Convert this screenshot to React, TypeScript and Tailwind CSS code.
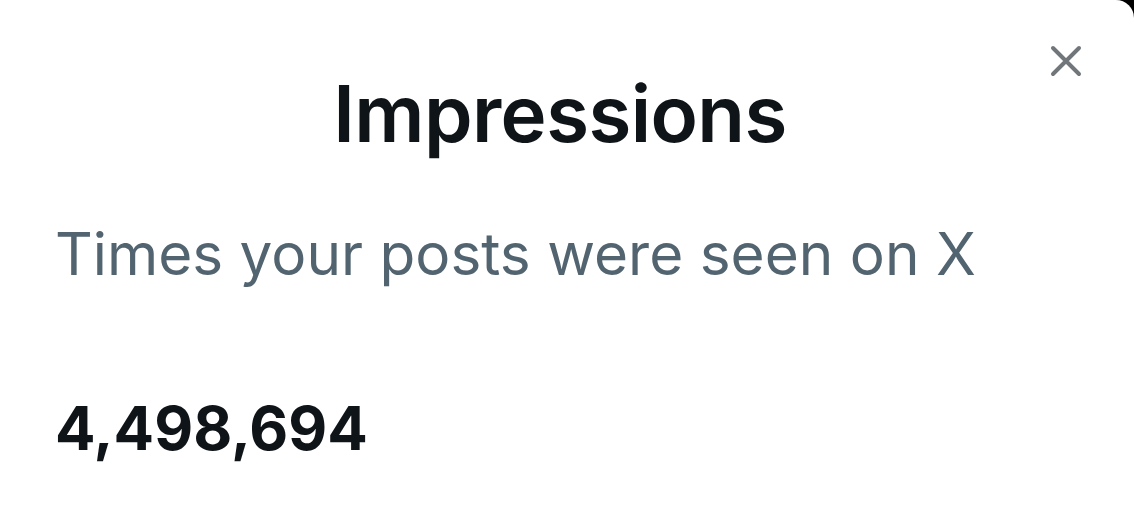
const CloseIcon = () => (
  <svg width="34" height="34" viewBox="0 0 34 34" fill="none">
    <path d="M4 4L30 30M30 4L4 30" stroke="currentColor" strokeWidth="4" strokeLinecap="round" />
  </svg>
);

const App = () => {
  return (
    <div className="w-[1134px] h-[515px] bg-black overflow-hidden">
      <div className="relative w-full h-full bg-white rounded-tr-[18px] font-['Inter',sans-serif] px-[55px]">
        <button className="absolute top-[44px] right-[51px] text-[#71767b]" aria-label="Close">
          <CloseIcon />
        </button>

        <div className="flex flex-col">
          <h1 className="pt-[66px] pr-[14px] text-center text-[78px] leading-[96px] font-semibold tracking-[-0.6px] text-[#0f1419]">
            Impressions
          </h1>
          <p className="mt-[54px] text-[58.5px] leading-[76px] text-[#536471]">
            Times your posts were seen on X
          </p>
          <p className="mt-[98px] text-[60px] leading-[76px] font-bold text-[#0f1419]">
            4,498,694
          </p>
        </div>
      </div>
    </div>
  );
};

export default App;
